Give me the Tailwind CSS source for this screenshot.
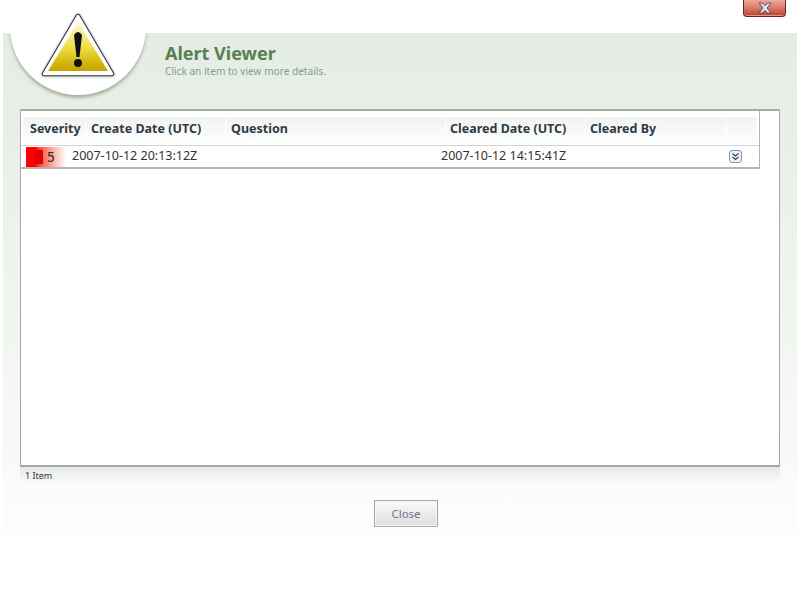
<!DOCTYPE html>
<html lang="en">

<head>
    <meta charset="UTF-8">
    <title>Alert Viewer</title>
    <script src="https://cdn.jsdelivr.net/npm/@tailwindcss/browser@4"></script>
</head>

<body class="bg-white w-[800px] h-[600px] overflow-hidden relative font-['Noto_Sans',sans-serif]">

    <!-- close button -->
    <div class="h-[33px] flex justify-end items-start pr-[14px]">
        <button class="w-[43px] h-[17px] rounded-b-[4px] border border-t-0 border-[#5e2a26] bg-gradient-to-b from-[#eea79b] via-[#dc7868] to-[#b5402d] shadow-[inset_0_-1px_0_#e2958a] flex items-center justify-center">
            <svg width="14" height="12" viewBox="0 0 14 12">
                <path d="M1 1h3.500L7 3.700 9.500 1H13L9 6l4 5H9.500L7 8.300 4.500 11H1l4-5z" fill="#e6e8f2" stroke="#4b5068" stroke-width="1" stroke-linejoin="round" />
            </svg>
        </button>
    </div>

    <!-- panel -->
    <div class="mx-[3px] h-[502px] bg-gradient-to-b from-[#e4ece3] via-[#f4f7f3] via-70% to-[#fdfdfd] flex flex-col">
        <div class="h-[76px] pl-[162px] pt-[9px] shrink-0">
            <h1 class="text-[18px] leading-[22px] font-bold text-[#5a7f55]">Alert Viewer</h1>
            <p class="text-[10.1px] leading-[13px] mt-[1px] text-[#82a088]">Click an item to view more details.</p>
        </div>

        <!-- list frame -->
        <div class="mx-[17px] h-[358px] bg-white border border-[#a9a9a9] border-t-2 border-b-2 shrink-0">
            <div class="w-[739px] border-r border-b-2 border-[#b4b4b4] text-[12.5px] text-[#333]">
                <div class="h-[35px] pt-[6px] px-[2px] border-b border-[#d4d4d4] flex font-bold text-[#2f3a45] leading-[16px]">
                    <div class="w-[63px] pl-[7px] pt-[4px] bg-gradient-to-b from-[#f1f2f2] to-white border-r border-white">Severity</div>
                    <div class="w-[140px] pl-[5px] pt-[4px] bg-gradient-to-b from-[#f1f2f2] to-white border-r border-white">Create Date (UTC)</div>
                    <div class="w-[220px] pl-[5px] pt-[4px] bg-gradient-to-b from-[#f1f2f2] to-white border-r border-white">Question</div>
                    <div class="w-[140px] pl-[4px] pt-[4px] bg-gradient-to-b from-[#f1f2f2] to-white border-r border-white">Cleared Date (UTC)</div>
                    <div class="w-[141px] pl-[4px] pt-[4px] bg-gradient-to-b from-[#f1f2f2] to-white border-r border-white">Cleared By</div>
                    <div class="flex-1 bg-gradient-to-b from-[#f1f2f2] to-white"></div>
                </div>
                <div class="h-[21px] flex items-center pl-[5px]">
                    <div class="w-[40px] h-[20px] relative bg-gradient-to-r from-[#ff0000] via-[#ff0000] via-25% to-white text-[13.5px] leading-[20px] pl-[21px] text-[#333] font-medium">
                        5
                        <span class="absolute left-[9px] top-[3px] w-[8px] h-[14px] bg-[#e0000c]"></span>
                    </div>
                    <div class="w-[375px] pl-[6px]">2007-10-12 20:13:12Z</div>
                    <div class="w-[288px]">2007-10-12 14:15:41Z</div>
                    <svg width="13" height="13" viewBox="0 0 13 13">
                        <rect x="0.500" y="0.500" width="12" height="12" rx="2.500" fill="#eef2f6" stroke="#7f93a8" />
                        <path d="M3.500 3.500 6.500 6 9.500 3.500M3.500 7 6.500 9.500 9.500 7" fill="none" stroke="#33475c" stroke-width="1.200" />
                    </svg>
                </div>
            </div>
        </div>

        <!-- status bar -->
        <div class="mx-[17px] h-[18px] pl-[5px] text-[9px] leading-[18px] text-[#333] bg-gradient-to-b from-[#e8eaea] to-[#fbfbfb] shrink-0">1 Item</div>

        <div class="pl-[371px] pt-[15px]">
            <button class="w-[64px] h-[27px] border border-[#a8a8a8] shadow-[inset_0_0_0_1px_#f4f4f4] bg-gradient-to-b from-[#fafafa] to-[#dedede] text-[11.5px] text-[#6b7686]">Close</button>
        </div>
    </div>

    <!-- warning badge: circle is cut off where the panel begins -->
    <div class="absolute left-0 top-[33px] w-[200px] h-[75px] overflow-hidden">
        <div class="absolute left-[10px] top-[-74px] w-[136px] h-[136px] rounded-full bg-white shadow-[0_3px_3px_rgba(120,135,115,0.55)]"></div>
    </div>
    <svg class="absolute left-[38px] top-[10px]" width="80" height="72" viewBox="0 0 80 72">
        <defs>
            <linearGradient id="tri" x1="0" y1="0" x2="0" y2="1">
                <stop offset="0" stop-color="#fdfbe0" />
                <stop offset="0.5" stop-color="#efe04a" />
                <stop offset="0.85" stop-color="#d2b50a" />
                <stop offset="1" stop-color="#c2a400" />
            </linearGradient>
            <filter id="soft" x="-10%" y="-10%" width="120%" height="120%">
                <feGaussianBlur stdDeviation="1" />
            </filter>
        </defs>
        <path d="M40 6 L74 64 L6 64 Z" fill="none" stroke="#999" stroke-width="5" stroke-linejoin="round" filter="url(#soft)" />
        <path d="M40 6 L74 64 L6 64 Z" fill="#fff" stroke="#333" stroke-width="4.500" stroke-linejoin="round" />
        <path d="M40 6 L74 64 L6 64 Z" fill="#fff" stroke="#fff" stroke-width="2.500" stroke-linejoin="round" />
        <path d="M40 12 L70 61 L10 61 Z" fill="url(#tri)" />
        <path d="M36 25 Q40 19 44 25 L41.500 47 L38.500 47 Z" fill="#111" />
        <circle cx="40" cy="53" r="4" fill="#111" />
    </svg>

</body>

</html>
